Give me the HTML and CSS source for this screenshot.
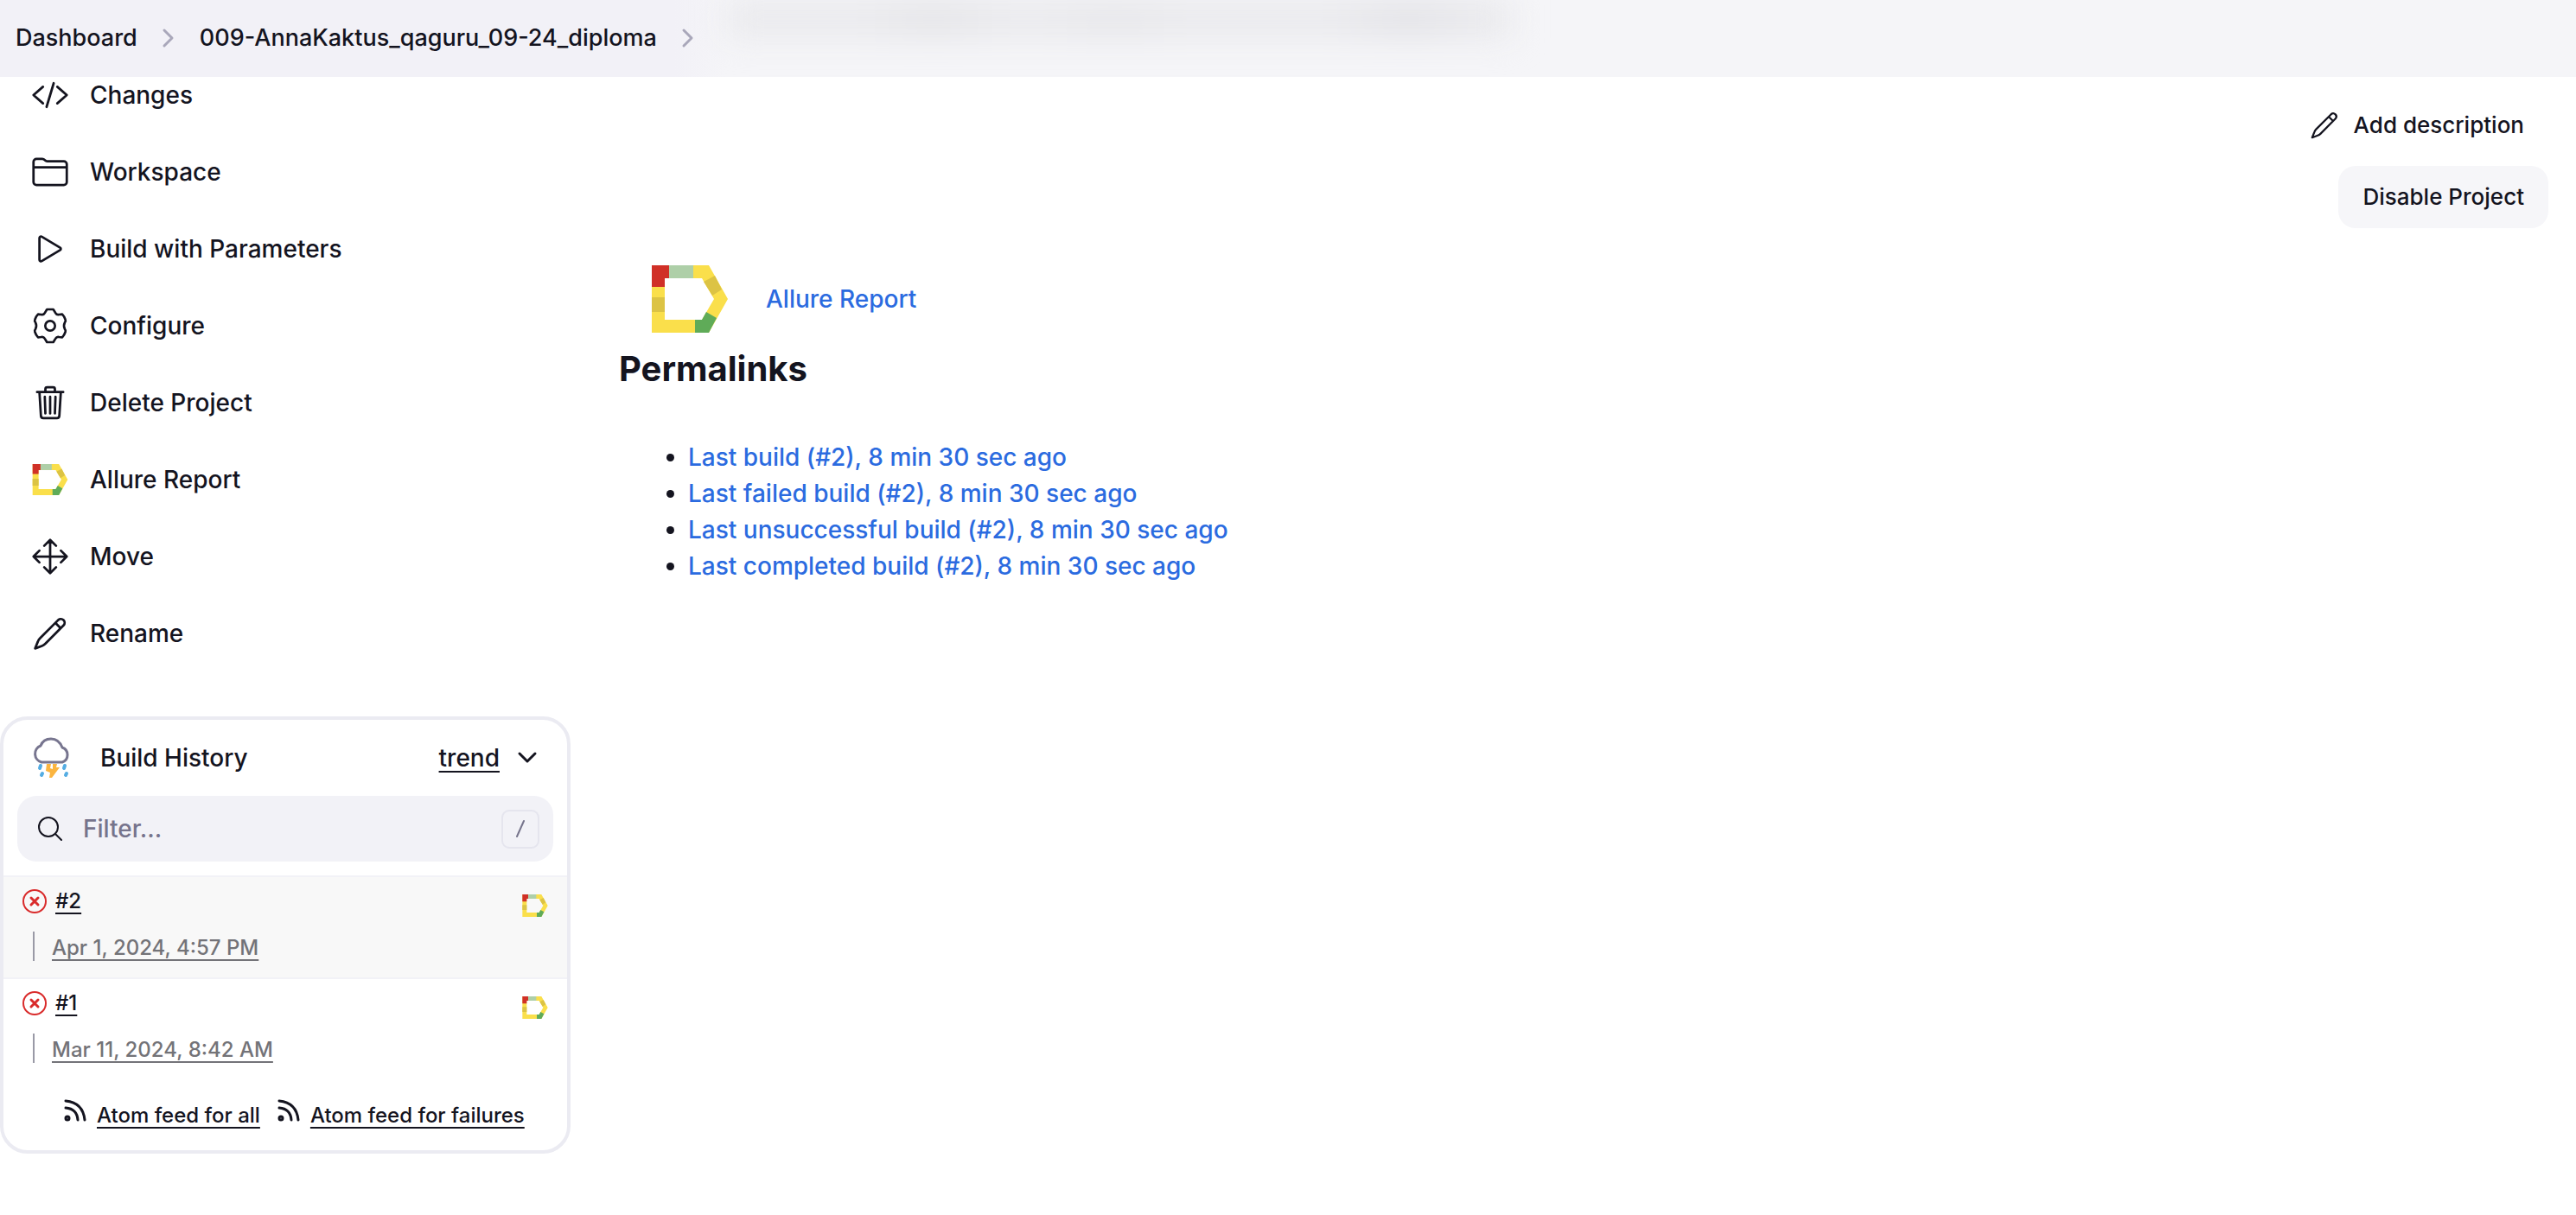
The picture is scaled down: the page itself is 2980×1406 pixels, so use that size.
FILE: index.html
```html
<!DOCTYPE html>
<html lang="en">
<head>
<meta charset="utf-8">
<title>009-AnnaKaktus_qaguru_09-24_diploma [Jenkins]</title>
<link rel="stylesheet" href="styles.css">
</head>
<body>
<svg class="sprite" aria-hidden="true">
  <symbol id="allure" viewBox="0 0 88 78">
    <path fill="#fadf4b" fill-rule="evenodd" d="M0 0H66L88 39L66 78H0ZM15 15V63H58L72 39L58 15Z"/>
    <path fill="#d03027" d="M0 0H20V15H15V25H0Z"/>
    <path fill="#aecfa8" d="M20 0H48V15H20Z"/>
    <path fill="#dcc344" d="M60 19L73 12L81 28L70 35ZM0 37H15V54H0Z"/>
    <path fill="#5fab58" d="M50 63H58L63 54L75 61L66 78H50Z"/>
  </symbol>
  <symbol id="pencil" viewBox="0 0 512 512">
    <path fill="none" stroke="currentColor" stroke-width="32" stroke-linecap="round" stroke-linejoin="round" d="M366 74L118 322Q100 340 90 368L54 458L146 424Q172 414 190 396L438 146A51 51 0 0 0 366 74ZM326 114L398 186"/>
  </symbol>
  <symbol id="chevron" viewBox="0 0 16 24">
    <path d="M3 3L12 12L3 21" fill="none" stroke="currentColor" stroke-width="3" stroke-linecap="round" stroke-linejoin="round"/>
  </symbol>
  <symbol id="failed" viewBox="0 0 28 28">
    <g fill="none" stroke="#d92b2b" stroke-width="2" stroke-linecap="round"><circle cx="14" cy="14" r="13"/><path stroke-width="3" d="M10 10L18 18M18 10L10 18"/></g>
  </symbol>
  <symbol id="feed" viewBox="0 0 26 26">
    <g fill="none" stroke="currentColor" stroke-width="3" stroke-linecap="round"><circle cx="4" cy="22" r="2"/><path d="M2 10Q15 11 16 24M2 2Q22 4 24 24"/></g>
  </symbol>
</svg>

<header class="breadcrumbs">
  <nav aria-label="Breadcrumbs">
    <a href="#">Dashboard</a>
    <svg class="crumb-arrow"><use href="#chevron"/></svg>
    <a href="#">009-AnnaKaktus_qaguru_09-24_diploma</a>
    <svg class="crumb-arrow"><use href="#chevron"/></svg>
  </nav>
</header>

<div class="page">
  <aside class="side">
    <nav class="tasks" aria-label="Project">
      <a href="#"><svg class="task-icon" viewBox="0 0 512 512"><path class="line" d="M160 368L32 256L160 144M352 368L480 256L352 144M304 96L208 416"/></svg>Changes</a>
      <a href="#"><svg class="task-icon" viewBox="0 0 512 512"><path class="line" d="M440 432H72a40 40 0 0 1-40-40V120a40 40 0 0 1 40-40h75.890a40 40 0 0 1 22.190 6.720l27.840 18.560a40 40 0 0 0 22.190 6.720H440a40 40 0 0 1 40 40v240a40 40 0 0 1-40 40zM32 192h448"/></svg>Workspace</a>
      <a href="#"><svg class="task-icon" viewBox="0 0 512 512"><path class="line" d="M112 111v290c0 17.440 17 28.520 31 20.160l247.900-148.370c12.120-7.250 12.120-26.330 0-33.580L143 90.840c-14-8.360-31 2.720-31 20.160z"/></svg>Build with Parameters</a>
      <a href="#"><svg class="task-icon" viewBox="18 15 132 132"><g class="line gear"><circle cx="84" cy="81" r="17"/><path d="M73 24H95L103 37Q107 44 115 42L126 41Q133 48 137 60Q139 65 135 69Q129 81 135 93Q139 97 137 102Q133 114 126 121L115 120Q107 118 103 125L95 138H73L65 125Q61 118 53 120L42 121Q35 114 31 102Q29 97 33 93Q39 81 33 69Q29 65 31 60Q35 48 42 41L53 42Q61 44 65 37Z"/></g></svg>Configure</a>
      <a href="#"><svg class="task-icon" viewBox="0 0 512 512"><path class="line" d="M112 112l20 320c.950 18.490 14.400 32 32 32h184c17.670 0 30.870-13.510 32-32l20-320M80 112h352M192 112V72a24 24 0 0 1 24-24h80a24 24 0 0 1 24 24v40M256 176v224M184 176l8 224M328 176l-8 224"/></svg>Delete Project</a>
      <a href="#"><svg class="task-icon allure"><use href="#allure"/></svg>Allure Report</a>
      <a href="#"><svg class="task-icon" viewBox="0 0 512 512"><path class="line" d="M176 112L256 32L336 112M256 32V480M176 400L256 480L336 400M400 176L480 256L400 336M112 176L32 256L112 336M32 256H480"/></svg>Move</a>
      <a href="#"><svg class="task-icon"><use href="#pencil"/></svg>Rename</a>
    </nav>

    <section class="history">
      <div class="history-head">
        <svg class="weather" viewBox="0 0 48 48">
          <path d="M13 29A10 10 0 0 1 12 10Q15 2 24 2Q33 2 37 12A9 9 0 0 1 37 29Z" fill="none" stroke="#77758f" stroke-width="3" stroke-linejoin="round"/>
          <path d="M19 31H24L23 36L26 37L26 31H31L30 35H34L25 47H22L23 41L18 39Z" fill="#fbb540"/>
          <path d="M12 33L11 36M14 42L13 44M40 33L39 36M42 42L41 44" stroke="#55ade3" stroke-width="4" stroke-linecap="round"/>
        </svg>
        <h2>Build History</h2>
        <a href="#">trend</a>
        <button class="toggle" type="button" aria-label="Collapse"><svg viewBox="0 0 24 16"><path d="M3 3L12 12L21 3" fill="none" stroke="currentColor" stroke-width="3" stroke-linecap="round" stroke-linejoin="round"/></svg></button>
      </div>
      <label class="filter">
        <svg viewBox="0 0 28 28"><g fill="none" stroke="currentColor" stroke-width="2" stroke-linecap="round"><circle cx="12" cy="12" r="11"/><path d="M20 20L27 27"/></g></svg>
        <input type="search" placeholder="Filter..." aria-label="Filter builds">
        <kbd><svg viewBox="0 0 12 22"><path d="M10 2L2 20" fill="none" stroke="currentColor" stroke-width="2" stroke-linecap="round"/></svg></kbd>
      </label>
      <ul class="builds">
        <li class="build current">
          <div class="build-name"><svg class="status"><use href="#failed"/></svg><a href="#">#2</a></div>
          <a class="report" href="#" aria-label="Allure Report"><svg><use href="#allure"/></svg></a>
          <div class="build-date"><a href="#">Apr 1, 2024, 4:57 PM</a></div>
        </li>
        <li class="build">
          <div class="build-name"><svg class="status"><use href="#failed"/></svg><a href="#">#1</a></div>
          <a class="report" href="#" aria-label="Allure Report"><svg><use href="#allure"/></svg></a>
          <div class="build-date"><a href="#">Mar 11, 2024, 8:42 AM</a></div>
        </li>
      </ul>
      <div class="feeds">
        <span><svg><use href="#feed"/></svg><a href="#">Atom feed for all</a></span>
        <span><svg><use href="#feed"/></svg><a href="#">Atom feed for failures</a></span>
      </div>
    </section>
  </aside>

  <main class="main">
    <div class="summary">
      <a class="allure-link" href="#"><svg><use href="#allure"/></svg>Allure Report</a>
      <h2>Permalinks</h2>
      <ul class="permalinks">
        <li><a href="#">Last build (#2), 8 min 30 sec ago</a></li>
        <li><a href="#">Last failed build (#2), 8 min 30 sec ago</a></li>
        <li><a href="#">Last unsuccessful build (#2), 8 min 30 sec ago</a></li>
        <li><a href="#">Last completed build (#2), 8 min 30 sec ago</a></li>
      </ul>
    </div>
    <div class="actions">
      <a class="describe" href="#"><svg><use href="#pencil"/></svg>Add description</a>
      <button class="disable" type="button">Disable Project</button>
    </div>
  </main>
</div>
</body>
</html>
```
FILE: styles.css
```css
* { box-sizing: border-box; }

body {
  margin: 0;
  background: #fff;
  color: #14141f;
  font: 500 28px/42px Inter, "Liberation Sans", sans-serif;
}

a { color: inherit; text-decoration: none; }
svg { display: block; flex: none; }
h2, ul { margin: 0; padding: 0; }
button { border: 0; color: inherit; font: inherit; }

.sprite { position: absolute; width: 0; height: 0; }
.line {
  fill: none;
  stroke: currentColor;
  stroke-width: 32;
  stroke-linecap: round;
  stroke-linejoin: round;
}
.gear { stroke-width: 8; }

.breadcrumbs {
  position: relative;
  z-index: 1;
  overflow: hidden;
  height: 89px;
  padding: 0 18px;
  background: linear-gradient(90deg, #f2f1f7 780px, #f5f5f8 840px);
  font-size: 27px;
}
.breadcrumbs::before {
  content: "";
  position: absolute;
  left: 840px;
  top: 0;
  width: 910px;
  height: 44px;
  background:
    radial-gradient(circle at 240px 24px, #e4e4e7, transparent 90px),
    radial-gradient(circle at 450px 34px, #e6e6e9, transparent 90px),
    radial-gradient(circle at 790px 20px, #e2e2e6, transparent 100px),
    #eaeaed;
  filter: blur(18px);
}
.breadcrumbs nav {
  position: relative;
  display: flex;
  align-items: center;
  height: 88px;
}
.crumb-arrow { width: 16px; height: 24px; margin: 0 28px; color: #a9a7ba; }

.page { display: flex; align-items: flex-start; }
.side { width: 660px; flex: none; }

.tasks {
  display: flex;
  flex-direction: column;
  gap: 5px;
  margin-top: -21px;
}
.tasks a {
  display: flex;
  align-items: center;
  gap: 24px;
  height: 84px;
  padding-left: 36px;
}
.task-icon { width: 44px; height: 44px; }
.task-icon.allure { height: 36px; padding: 0 1px; }

.history {
  margin-top: 54px;
  border: 4px solid #ebebf2;
  border-radius: 32px;
}
.history-head {
  display: flex;
  align-items: center;
  height: 88px;
  padding: 0 34px 0 31px;
}
.history-head h2 { flex: 1; font: inherit; padding-left: 33px; }
.weather { width: 48px; height: 48px; }
.history a { text-decoration: underline; text-underline-offset: 5px; text-decoration-thickness: 2px; }
.toggle { background: none; padding: 0 0 0 20px; }
.toggle svg { width: 24px; height: 16px; }

.filter {
  display: flex;
  align-items: center;
  height: 76px;
  margin: 0 16px 16px;
  padding: 0 16px 0 24px;
  border-radius: 22px;
  background: #f2f2f7;
}
.filter > svg { width: 28px; height: 28px; }
.filter input {
  flex: 1;
  min-width: 0;
  padding: 0 24px;
  border: 0;
  outline: 0;
  background: none;
  font: inherit;
}
.filter input::placeholder { color: #76748c; opacity: 1; }
.filter kbd {
  display: grid;
  place-items: center;
  width: 44px;
  height: 45px;
  border: 2px solid #e5e5ee;
  border-radius: 9px;
  color: #76748c;
}
.filter kbd svg { width: 12px; height: 22px; }

.builds { list-style: none; }
.build {
  display: grid;
  grid-template-columns: 1fr auto;
  height: 118px;
  padding: 9px 22px 0;
  border-top: 2px solid #f2f2f7;
  align-content: start;
  row-gap: 16px;
}
.build.current { background: #f8f8f8; }
.build-name { display: flex; align-items: center; gap: 10px; height: 38px; font-size: 24px; }
.status { width: 28px; height: 28px; }
.report { padding-top: 11px; }
.report svg { width: 30px; height: 26px; }
.build-date {
  grid-column: 1 / -1;
  margin-left: 12px;
  padding-left: 20px;
  border-left: 2px solid #9a9aa6;
  height: 34px;
  font-size: 24px;
  line-height: 38px;
  color: #737378;
}
.feeds {
  display: flex;
  gap: 20px;
  padding: 23px 0 21px 70px;
  font-size: 24px;
  line-height: 38px;
}
.feeds span { display: flex; gap: 12px; }
.feeds svg { width: 26px; height: 26px; }

.main { flex: 1; display: flex; justify-content: space-between; padding: 30px 32px 0 56px; }
.summary { padding-top: 188px; }
.allure-link { display: flex; align-items: center; gap: 44px; padding-left: 38px; height: 78px; }
.allure-link svg { width: 88px; height: 78px; }
.summary a { color: #2b6be0; }
.summary h2 { margin-top: 15px; font-size: 40px; line-height: 54px; font-weight: 700; }
.permalinks { margin-top: 54px; padding-left: 80px; }

.actions { display: flex; flex-direction: column; align-items: flex-end; font-size: 26px; }
.describe { display: flex; align-items: center; gap: 16px; height: 52px; margin-right: 28px; }
.describe svg { width: 36px; height: 36px; }
.disable {
  height: 72px;
  margin-top: 21px;
  padding: 0 28px;
  border-radius: 20px;
  background: #f6f6f9;
  font-size: 26px;
}
```
